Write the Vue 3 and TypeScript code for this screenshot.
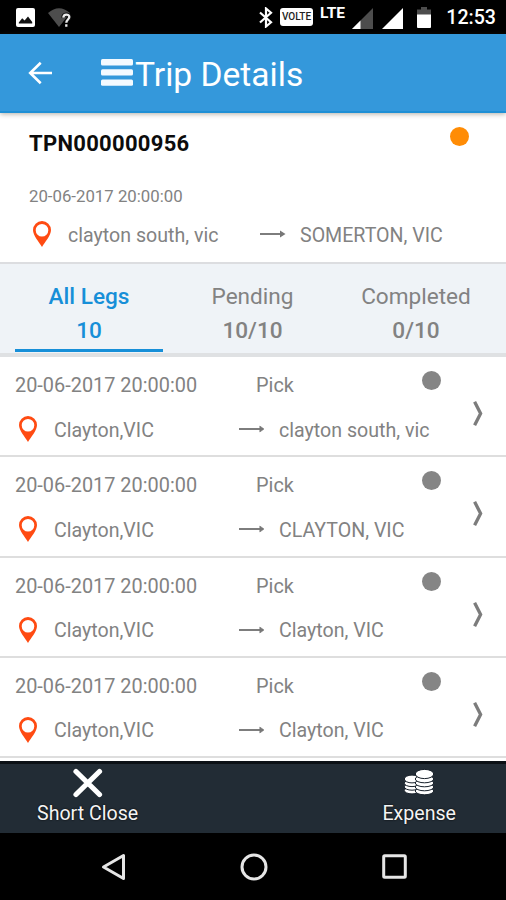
<script setup lang="ts">
interface Leg {
  id: number
  time: string
  kind: string
  from: string
  to: string
}

const destinations: string[] = ['clayton south, vic', 'CLAYTON, VIC', 'Clayton, VIC', 'Clayton, VIC']

const legs: Leg[] = destinations.map((to, id) => ({
  id,
  time: '20-06-2017 20:00:00',
  kind: 'Pick',
  from: 'Clayton,VIC',
  to,
}))

const tabs = [
  { label: 'All Legs', count: '10', active: true },
  { label: 'Pending', count: '10/10', active: false },
  { label: 'Completed', count: '0/10', active: false },
]
</script>

<template>
  <div class="screen">
    <div class="status">
      <svg class="s-image" width="19" height="19" viewBox="0 0 19 19">
        <rect width="19" height="19" rx="2" fill="#fff" />
        <path d="M2.800 15.500v-1l3.400-4.300 2.400 2.400 3.400-4 4.200 5.500v1.400z" fill="#111" />
      </svg>
      <svg class="s-wifi" width="24" height="20" viewBox="0 0 24 20">
        <path d="M0 5Q11-4.500 22 5L11 19z" fill="#4d4d4d" />
        <path d="M15.300 9.800c0-4.400 6-4.200 6-.6 0 2.400-2.900 2.500-2.900 5.600" fill="none" stroke="#111" stroke-width="4" />
        <path d="M15.300 9.600c.2-4.100 6-3.900 6-.5 0 2.400-3 2.600-3 5.700M18.300 16.200v2.600" fill="none" stroke="#ececec" stroke-width="2.300" />
      </svg>
      <svg class="s-bt" width="14" height="21" viewBox="0 0 14 21">
        <path d="M1 5.500l11 9.800-5 4.200V1.500l5 4.200L1 15.500" fill="none" stroke="#fff" stroke-width="2.200" />
      </svg>
      <span class="s-volte">VOLTE</span>
      <span class="s-lte">LTE</span>
      <svg class="s-sig1" width="21" height="21" viewBox="0 0 21 21">
        <path d="M21 0v21H0z" fill="#4d4d4d" />
        <path d="M8.500 12.500V21H0z" fill="#fff" />
      </svg>
      <svg class="s-sig2" width="21" height="21" viewBox="0 0 21 21">
        <path d="M21 0v21H0z" fill="#fff" />
      </svg>
      <svg class="s-bat" width="14" height="21" viewBox="0 0 14 21">
        <path d="M0 2.500h4V0h6v2.500h4V8H0z" fill="#4d4d4d" />
        <path d="M0 7.500h14V20a1 1 0 0 1-1 1H1a1 1 0 0 1-1-1z" fill="#fff" />
      </svg>
      <span class="s-time">12:53</span>
    </div>

    <header class="appbar">
      <svg class="back" width="24" height="24" viewBox="0 0 24 24">
        <path d="M12.700 1.800L2.200 12l10.500 10.200M2.400 12H24" fill="none" stroke="#fff" stroke-width="2.600" />
      </svg>
      <svg class="burger" width="32" height="27" viewBox="0 0 32 27">
        <rect width="32" height="6.400" rx="1.500" fill="#f4faff" />
        <rect y="10.200" width="32" height="6.400" rx="1.500" fill="#f4faff" />
        <rect y="20.400" width="32" height="6.400" rx="1.500" fill="#f4faff" />
      </svg>
      <h1>Trip Details</h1>
    </header>

    <section class="trip">
      <div class="trip-head">
        <strong>TPN000000956</strong>
        <i class="dot orange"></i>
      </div>
      <div class="trip-date">20-06-2017 20:00:00</div>
      <div class="route">
        <svg class="pin" width="18" height="26" viewBox="0 0 18 26">
          <path fill-rule="evenodd" d="M9 0a9 9 0 0 1 9 9c0 5.500-6 12-9 17-3-5-9-11.500-9-17a9 9 0 0 1 9-9zm0 3a6.300 6.300 0 1 0 0 12.600A6.300 6.300 0 0 0 9 3z" fill="#ff4b12" />
        </svg>
        <span class="from">clayton south, vic</span>
        <svg class="arrow" width="26" height="8" viewBox="0 0 26 8">
          <path d="M0 4h22" stroke="#777" stroke-width="1.900" />
          <path d="M20 .6L25.500 4 20 7.400z" fill="#777" />
        </svg>
        <span class="to">SOMERTON, VIC</span>
      </div>
    </section>

    <nav class="tabs">
      <div v-for="t in tabs" :key="t.label" class="tab" :class="{ active: t.active }">
        <span class="label">{{ t.label }}</span>
        <span class="count">{{ t.count }}</span>
      </div>
    </nav>

    <main class="legs">
      <article v-for="leg in legs" :key="leg.id" class="leg">
        <div class="info">
          <div class="top">
            <span class="time">{{ leg.time }}</span>
            <span class="kind">{{ leg.kind }}</span>
            <i class="dot"></i>
          </div>
          <div class="route">
            <svg class="pin" width="18" height="26" viewBox="0 0 18 26">
              <path fill-rule="evenodd" d="M9 0a9 9 0 0 1 9 9c0 5.500-6 12-9 17-3-5-9-11.500-9-17a9 9 0 0 1 9-9zm0 3a6.300 6.300 0 1 0 0 12.600A6.300 6.300 0 0 0 9 3z" fill="#ff4b12" />
            </svg>
            <span class="from">{{ leg.from }}</span>
            <svg class="arrow" width="26" height="8" viewBox="0 0 26 8">
              <path d="M0 4h24" stroke="#777" stroke-width="1.900" />
              <path d="M20.800 1L25 4l-4.200 3z" fill="#777" stroke="#777" stroke-width=".6" />
            </svg>
            <span class="to">{{ leg.to }}</span>
          </div>
        </div>
        <svg class="chevron" width="10" height="25" viewBox="0 0 10 25">
          <path d="M1.600 .8L7.600 12.500 1.600 24.200" fill="none" stroke="#7c7c7c" stroke-width="3.300" />
        </svg>
      </article>
    </main>

    <footer class="actions">
      <div class="action close">
        <svg width="30" height="30" viewBox="0 0 30 30">
          <path d="M3 3.500l23.500 23M26.500 3.500L3 26.500" stroke="#fff" stroke-width="5.200" stroke-linecap="round" />
        </svg>
        <span>Short Close</span>
      </div>
      <div class="action expense">
        <svg width="30" height="30" viewBox="0 0 30 30">
          <g fill="#fff" stroke="#17202a" stroke-width="1">
            <ellipse cx="8" cy="22.500" rx="7.700" ry="3.400" />
            <ellipse cx="8" cy="18.800" rx="7.700" ry="3.400" />
            <ellipse cx="8" cy="15.200" rx="7.700" ry="3.400" />
            <ellipse cx="8" cy="11" rx="7.700" ry="3.900" />
            <ellipse cx="20.500" cy="23" rx="9.200" ry="3.800" />
            <ellipse cx="20.500" cy="19" rx="9.200" ry="3.800" />
            <ellipse cx="20.500" cy="15" rx="9.200" ry="3.800" />
            <ellipse cx="20.500" cy="11" rx="9.200" ry="3.800" />
            <ellipse cx="20.500" cy="6" rx="9.200" ry="4.600" />
          </g>
        </svg>
        <span>Expense</span>
      </div>
    </footer>

    <div class="sysnav">
      <svg width="25" height="28" viewBox="0 0 25 28">
        <path d="M22.500 2.500v23L2.500 14z" fill="none" stroke="#e6e6e6" stroke-width="3" stroke-linejoin="round" />
      </svg>
      <svg width="28" height="28" viewBox="0 0 28 28">
        <circle cx="14" cy="14" r="12" fill="none" stroke="#e6e6e6" stroke-width="3" />
      </svg>
      <svg width="25" height="25" viewBox="0 0 25 25">
        <rect x="1.700" y="1.700" width="21.600" height="21.600" rx="1" fill="none" stroke="#e6e6e6" stroke-width="3" />
      </svg>
    </div>
  </div>
</template>

<style>
body {
  margin: 0;
  background: #000;
}
</style>

<style scoped>
.screen {
  width: 506px;
  height: 900px;
  overflow: hidden;
  display: flex;
  flex-direction: column;
  background: #fff;
  color: #828282;
  font-family: Roboto, 'Liberation Sans', sans-serif;
  font-size: 19.600px;
  white-space: nowrap;
}
.screen > * {
  flex-shrink: 0;
  box-sizing: border-box;
}
svg {
  display: block;
  flex-shrink: 0;
}
.status {
  height: 34px;
  padding: 8px 10px 0 16px;
  display: flex;
  align-items: flex-start;
  background: #000;
  color: #fff;
}
.s-wifi { margin-left: 13px; }
.s-bt { margin: -1px 0 0 187px; }
.s-volte {
  box-sizing: border-box;
  width: 34px;
  height: 18px;
  margin-left: 7px;
  border-radius: 3px;
  background: #fff;
  color: #222;
  font-size: 10px;
  font-weight: 500;
  line-height: 18px;
  text-align: center;
}
.s-lte {
  width: 26px;
  margin: -3px 0 0 7px;
  font-size: 15.500px;
  font-weight: 700;
  line-height: 17px;
}
.s-sig1 { margin-left: 7px; }
.s-sig2 { margin-left: 9px; }
.s-bat { margin: -1px 0 0 14px; }
.s-time {
  margin: -1px 0 0 15px;
  font-size: 19.600px;
  font-weight: 500;
  line-height: 22px;
}
.appbar {
  height: 79px;
  padding: 0 0 0 28px;
  display: flex;
  align-items: center;
  background: #3498db;
  border-bottom: 2px solid #1e8fd5;
  color: #fff;
  z-index: 1;
  box-shadow: 0 1px 5px rgba(60, 50, 30, 0.4);
}
.burger { margin-left: 49px; }
h1 {
  margin: 4px 0 0 2px;
  font-size: 33.600px;
  font-weight: 400;
  line-height: 40px;
}
.trip {
  height: 151px;
  padding: 14px 37px 0 29px;
  border-bottom: 2px solid #dcdde0;
}
.trip-head {
  display: flex;
  justify-content: space-between;
  height: 32px;
  color: #0c0c0c;
  font-size: 22px;
  line-height: 33px;
}
.trip-head strong {
  font-weight: 700;
  letter-spacing: 0.3px;
}
.dot {
  width: 19px;
  height: 19px;
  border-radius: 50%;
  background: #858585;
}
.orange { background: #ff8c05; }
.trip-date {
  margin-top: 25px;
  font-size: 16.800px;
  line-height: 24px;
}
.route {
  display: flex;
  align-items: center;
  height: 26px;
}
.pin { margin-left: 4px; }
.trip .route { margin-top: 13px; }
.from {
  width: 185px;
  margin-left: 17px;
}
.from,
.to {
  padding-top: 2px;
}
.arrow { margin-right: 14px; }
.trip .from { width: 192px; }
.tabs {
  height: 93px;
  padding: 0 15px;
  display: grid;
  grid-template-columns: 148px 148px 148px;
  column-gap: 15.500px;
  background: #eff3f7;
  border-bottom: 4px solid #dfe1e3;
}
.tab {
  display: flex;
  flex-direction: column;
  align-items: center;
  padding-top: 16px;
  box-sizing: border-box;
  height: 88px;
  border-bottom: 3px solid transparent;
  font-size: 22.600px;
  line-height: 34px;
}
.count { font-weight: 500; }
.tab.active {
  border-bottom-color: #178fd8;
  color: #178fd8;
  font-weight: 500;
}
.legs {
  height: 404px;
  background: #fff;
}
.leg {
  box-sizing: border-box;
  height: 100.250px;
  padding: 14px 23px 0 15px;
  display: flex;
  justify-content: space-between;
  border-bottom: 2px solid #dedede;
}
.info { width: 426px; }
.top {
  display: flex;
  height: 45px;
  font-size: 19.900px;
  line-height: 29px;
}
.time { width: 241px; }
.kind { flex: 1; }
.chevron { margin-top: 30px; }
.actions {
  height: 72px;
  padding: 4px 50px 0 37px;
  display: flex;
  justify-content: space-between;
  background: #222c35;
  border-top: 3px solid #0c1116;
  color: #f4f4f4;
}
.action {
  display: flex;
  flex-direction: column;
  align-items: center;
  line-height: 31px;
  text-shadow: 0 0 2px #000;
}
.sysnav {
  height: 67px;
  padding: 0 99px 0 101px;
  display: flex;
  justify-content: space-between;
  align-items: center;
  background: #000;
}
</style>
